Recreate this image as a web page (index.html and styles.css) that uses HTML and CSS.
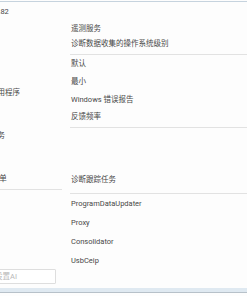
FILE: index.html
```
<!DOCTYPE html>
<html lang="zh-CN">
<head>
  <meta charset="UTF-8" />
  <meta name="viewport" content="width=device-width, initial-scale=1.0"/>
  <title>隐私设置</title>
  <link rel="stylesheet" href="styles.css">
</head>
<body>
  <div class="window">
    <div class="main">
      <aside class="sidebar">
        <div class="side-version">版本号 v1.0.82</div>
        <div class="side-item first">管理后台应用程序</div>
        <div class="side-item">管理计划任务</div>
        <div class="side-item">编辑 右键菜单</div>
        <div class="side-sep"></div>
        <input class="side-search" type="text" placeholder="搜索功能设置AI">
      </aside>

      <section class="content">
        <div class="group-title">遥测服务</div>
        <div class="group-sub">诊断数据收集的操作系统级别</div>
        <div class="sep"></div>
        <div class="option">默认</div>
        <div class="option">最小</div>
        <div class="option">Windows 错误报告</div>
        <div class="group-sub">反馈频率</div>
        <div class="sep"></div>

        <div class="task-title">诊断跟踪任务</div>
        <div class="sep"></div>
        <div class="task">ProgramDataUpdater</div>
        <div class="task">Proxy</div>
        <div class="task">Consolidator</div>
        <div class="task">UsbCeip</div>
      </section>
    </div>
    <div class="statusbar"></div>
  </div>
</body>
</html>
```

FILE: styles.css
```
html, body {
  margin: 0;
  padding: 0;
  background: #fdfdfd;
  overflow: hidden;
}
body {
  font-family: Roboto, "Noto Sans CJK SC", sans-serif;
  font-size: 7.5px;
  color: #484848;
}
.window {
  width: 247px;
  height: 296px;
  padding-top: 1px;
  box-sizing: border-box;
  display: flex;
  flex-direction: column;
}
.window::before {
  content: "";
  height: 1px;
  background: #c6d3de;
}
.main {
  flex: 1;
  display: flex;
}
.sidebar {
  width: 102px;
  margin-left: -40px;
  flex-shrink: 0;
  display: flex;
  flex-direction: column;
}
.side-version {
  height: 16px;
  line-height: 16px;
  margin-top: 2px;
  white-space: nowrap;
}
.side-item {
  height: 16px;
  line-height: 16px;
  margin-top: 27px;
  white-space: nowrap;
}
.side-item.first {
  margin-top: 65px;
}
.side-sep {
  height: 1px;
  background: #e2e2e2;
  margin-top: 2px;
}
.side-search {
  margin-top: 79px;
  width: 96px;
  height: 15px;
  box-sizing: border-box;
  border: 1px solid #dedede;
  border-radius: 1px;
  background: #fff;
  font: inherit;
  padding: 0 4px;
}
.side-search::placeholder {
  color: #b8b8b8;
}
.content {
  flex: 1;
  margin-left: 8px;
  padding-top: 19px;
}
.group-title,
.group-sub {
  height: 15px;
  line-height: 15px;
  padding-left: 1px;
}
.sep {
  height: 1px;
  background: #e2e2e2;
  margin-top: 3px;
}
.option {
  height: 18px;
  line-height: 18px;
  padding-left: 1px;
}
.task-title {
  margin-top: 44px;
  height: 16px;
  line-height: 16px;
  padding-left: 1px;
}
.task-title + .sep {
  margin-top: 5px;
}
.task {
  height: 19px;
  line-height: 19px;
  padding-left: 1px;
}
.task:first-of-type {
  margin-top: 6px;
}
.statusbar {
  height: 4px;
  background: #dfe9f1;
  border-bottom: 1px solid #b7c1c9;
  margin-bottom: 3px;
}
```
